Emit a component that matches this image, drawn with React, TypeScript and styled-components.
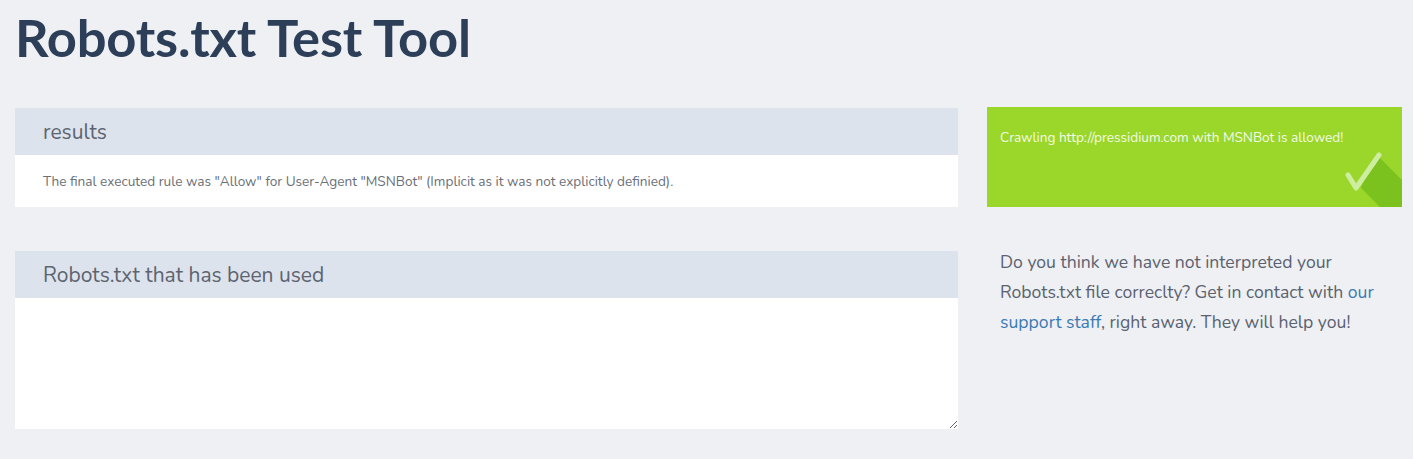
import styled, { createGlobalStyle } from "styled-components";

const GlobalStyle = createGlobalStyle`
    body {
        margin: 0;
        background: #eef0f3;
        font-family: "Nunito", "Lato", "Noto Sans", sans-serif;
    }
`;

const Page = styled.div`
    padding: 0 15px;
`;

const Title = styled.h1`
    margin: 0;
    padding-top: 7px;
    height: 101px;
    font-family: "Lato", sans-serif;
    font-weight: 700;
    font-size: 52.5px;
    line-height: 60px;
    color: #2d3e58;
    letter-spacing: -0.2px;
`;

const Layout = styled.div`
    display: grid;
    grid-template-columns: 943px 415px;
    column-gap: 29px;
    row-gap: 44px;
`;

const Panel = styled.section`
    display: flex;
    flex-direction: column;
`;

const PanelHeader = styled.div`
    height: 47px;
    background: #dce3ec;
    display: flex;
    align-items: center;
    padding: 0 28px;
    font-size: 21px;
    color: #5d6470;
    font-weight: 400;
`;

const PanelBody = styled.div`
    background: #fff;
    height: 52px;
    display: flex;
    align-items: center;
    padding: 0 28px;
    font-size: 13.6px;
    color: #6a7078;
`;

const Source = styled.textarea`
    display: block;
    box-sizing: border-box;
    width: 100%;
    height: 131px;
    border: none;
    background: #fff;
    resize: vertical;
    outline: none;
    font-family: inherit;
    margin: 0;
`;

const Verdict = styled.div`
    position: relative;
    overflow: hidden;
    margin-top: -1px;
    height: 100px;
    background: #9bd62b;
    color: #f2fbe3;
    font-size: 13.6px;
    padding: 21px 13px 0;
    box-sizing: border-box;
`;

const CheckMark = styled.svg`
    position: absolute;
    right: 0;
    bottom: 0;
`;

const Help = styled.p`
    margin: -4px 0 0;
    padding: 0 13px;
    font-size: 17.6px;
    line-height: 30px;
    color: #5a6270;
`;

const Link = styled.a`
    color: #3b7ab3;
    text-decoration: none;
`;

function App() {
    return (
        <Page>
            <GlobalStyle />
            <Title>Robots.txt Test Tool</Title>
            <Layout>
                <Panel>
                    <PanelHeader>results</PanelHeader>
                    <PanelBody>
                        The final executed rule was "Allow" for User-Agent "MSNBot" (Implicit as it was not explicitly definied).
                    </PanelBody>
                </Panel>
                <Verdict>
                    Crawling http://pressidium.com with MSNBot is allowed!
                    <CheckMark width="60" height="62" viewBox="0 0 60 62">
                        {/* long shadow */}
                        <polygon points="36,11 60,35 60,62 38,62 19,43 20,40" fill="#7cc21f" />
                        <polyline
                            points="6,30 14,43 37,10"
                            fill="none"
                            stroke="#cdeea0"
                            strokeWidth="5"
                            strokeLinecap="round"
                            strokeLinejoin="round"
                        />
                    </CheckMark>
                </Verdict>
                <Panel>
                    <PanelHeader>Robots.txt that has been used</PanelHeader>
                    <Source readOnly />
                </Panel>
                <Help>
                    Do you think we have not interpreted your Robots.txt file correclty? Get in contact with{" "}
                    <Link href="#">our support staff</Link>, right away. They will help you!
                </Help>
            </Layout>
        </Page>
    );
}

export default App;
